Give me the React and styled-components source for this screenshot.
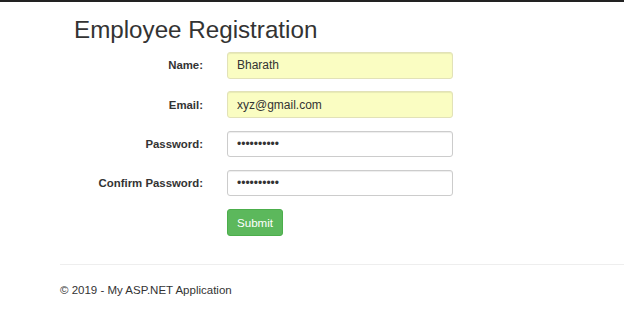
import React from "react";
import styled, { createGlobalStyle } from "styled-components";

const Global = createGlobalStyle`
  html, body { margin: 0; padding: 0; background: #fff; }
  body { font-family: "Liberation Sans", Arial, sans-serif; color: #333; }
`;

const TopBar = styled.div`
  height: 2px;
  background: #222;
`;

const Page = styled.div`
  padding: 0 0 0 60px;
`;

const Heading = styled.h2`
  margin: 14px 0 0 14px;
  font-size: 24.2px;
  font-weight: 500;
  line-height: 28px;
  color: #333;
`;

const Form = styled.form`
  display: grid;
  grid-template-columns: 143px 226px;
  column-gap: 24px;
  row-gap: 12.8px;
  margin-top: 8px;
  align-items: center;
`;

const Label = styled.label`
  text-align: right;
  font-size: 11.4px;
  font-weight: bold;
  color: #333;
`;

const Input = styled.input`
  box-sizing: border-box;
  width: 226px;
  height: 26.5px;
  padding: 0 9px;
  border: 1px solid ${(p) => (p.$filled ? "#e2e2b8" : "#ccc")};
  border-radius: 3px;
  background: ${(p) => (p.$filled ? "#fafdc2" : "#fff")};
  box-shadow: inset 0 1px 1px rgba(0, 0, 0, 0.075);
  font-family: "Liberation Sans", Arial, sans-serif;
  font-size: 12px;
  color: #333;
  outline: none;
`;

const Submit = styled.button`
  grid-column: 2;
  justify-self: start;
  width: 56px;
  height: 27px;
  border: 1px solid #4cae4c;
  border-radius: 3px;
  background: #5cb85c;
  color: #fff;
  font-family: "Liberation Sans", Arial, sans-serif;
  font-size: 11.6px;
  padding: 0;
`;

const Rule = styled.hr`
  margin: 28px 0 0 0;
  border: 0;
  border-top: 1px solid #eee;
`;

const Footer = styled.footer`
  margin-top: 19px;
  font-size: 11.5px;
  color: #333;
`;

export default function App() {
  return (
    <>
      <Global />
      <TopBar />
      <Page>
        <Heading>Employee Registration</Heading>
        <Form onSubmit={(e) => e.preventDefault()}>
          <Label>Name:</Label>
          <Input $filled readOnly defaultValue="Bharath" />
          <Label>Email:</Label>
          <Input $filled readOnly defaultValue="xyz@gmail.com" />
          <Label>Password:</Label>
          <Input type="password" readOnly defaultValue="1234567890" />
          <Label>Confirm Password:</Label>
          <Input type="password" readOnly defaultValue="1234567890" />
          <Submit type="submit">Submit</Submit>
        </Form>
        <Rule />
        <Footer>© 2019 - My ASP.NET Application</Footer>
      </Page>
    </>
  );
}
